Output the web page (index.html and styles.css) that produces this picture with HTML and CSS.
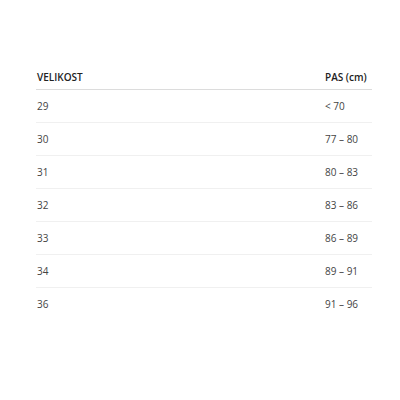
FILE: index.html
```html
<!DOCTYPE html>
<html>
<head>
<meta charset="utf-8">
<link rel="stylesheet" href="styles.css">
</head>
<body>
<div class="wrap">
<table class="sizes">
<thead>
<tr><th class="c1">VELIKOST</th><th class="c2">PAS (cm)</th></tr>
</thead>
<tbody>
<tr><td>29</td><td>&lt; 70</td></tr>
<tr><td>30</td><td>77 – 80</td></tr>
<tr><td>31</td><td>80 – 83</td></tr>
<tr><td>32</td><td>83 – 86</td></tr>
<tr><td>33</td><td>86 – 89</td></tr>
<tr><td>34</td><td>89 – 91</td></tr>
<tr><td>36</td><td>91 – 96</td></tr>
</tbody>
</table>
</div>
</body>
</html>
```
FILE: styles.css
```css
html, body { margin: 0; padding: 0; background: #fff; }
body { font-family: "Open Sans", "Noto Sans", sans-serif; color: #333; }
.wrap { padding: 61px 0 0 36px; }
.sizes { width: 336px; border-collapse: collapse; font-size: 10px; }
.sizes th { text-align: left; font-weight: 600; line-height: 14px; padding: 9px 0 5px 1px; border-bottom: 1px solid #dcdcdc; color: #222; }
.sizes td { line-height: 14px; padding: 9px 0 9px 1px; border-bottom: 1px solid #f0f0f0; color: #444; }
.sizes tbody tr:last-child td { border-bottom: none; }
.sizes .c2, .sizes td:nth-child(2) { width: 47px; }
```
